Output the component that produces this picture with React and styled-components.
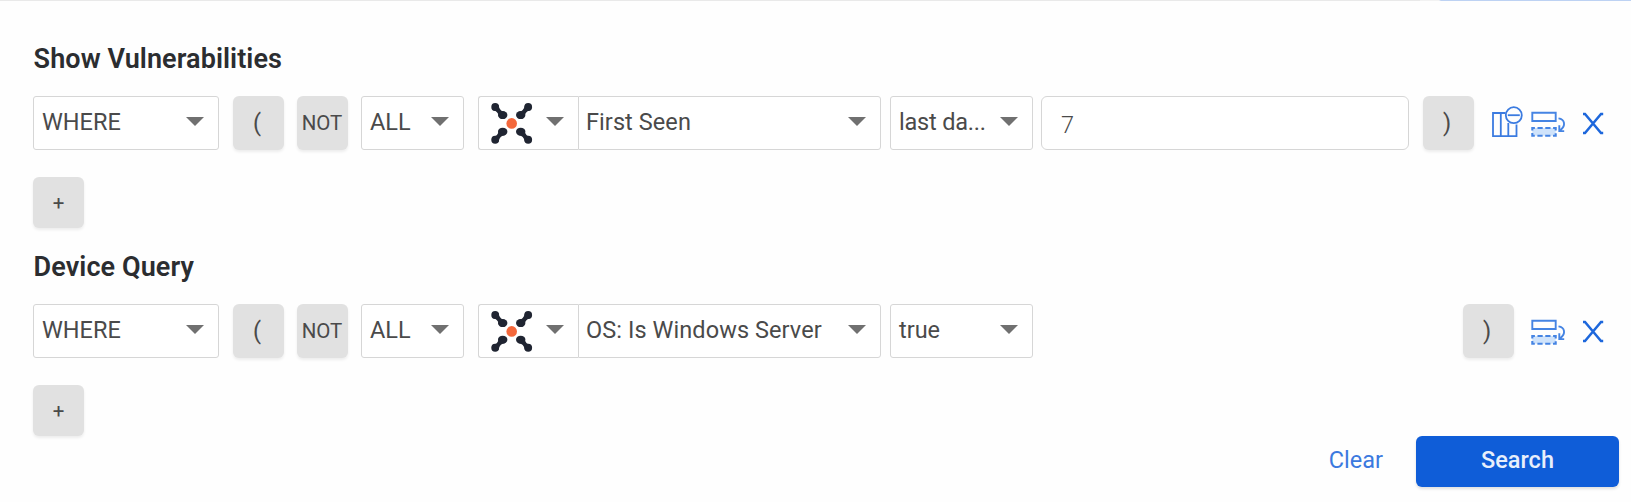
import React from 'react';
import styled, { createGlobalStyle } from 'styled-components';

const Global = createGlobalStyle`
  * { box-sizing: border-box; }
  body { margin: 0; background: #fefefe; font-family: Roboto, "Liberation Sans", sans-serif; color: #4a4a4a; }
  button, input { font-family: inherit; color: inherit; margin: 0; }
`;

const Page = styled.main`
  height: 502px;
  display: flex;
  flex-direction: column;
  overflow: hidden;
`;

const TopEdge = styled.div`
  flex: none;
  height: 1px;
  background: linear-gradient(90deg, #e9e9e9 1420px, #f2f2f2 1420px, #f2f2f2 1439px, #bdd2f3 1441px);
`;

const Section = styled.section`
  flex: none;
  height: 208px;
  padding: 0 0 0 33px;
  &:first-of-type { margin-top: 32px; }
`;

const Title = styled.h2`
  margin: 0;
  padding-left: 0.6px;
  height: 63px;
  line-height: 52px;
  font-size: 27px;
  font-weight: 600;
  letter-spacing: 0.08px;
  color: #2b2d30;
  white-space: nowrap;
`;

const Row = styled.div`
  display: flex;
  align-items: flex-start;
  height: 54px;
  margin-bottom: 27px;
`;

const SelectBox = styled.div`
  flex: none;
  display: flex;
  justify-content: space-between;
  width: ${p => p.$width}px;
  height: 54px;
  margin-right: ${p => p.$gap}px;
  padding: 0 14px 0 8px;
  border: 1px solid #d6d6d6;
  border-radius: 3px;
  background: #fff;
  font-size: 23.5px;
  line-height: 51px;
  letter-spacing: ${p => p.$spacing || 0}px;
  white-space: nowrap;
`;

const Combo = styled.div`
  display: flex;
  margin-right: 9px;
  ${SelectBox} { margin: 0; }
  ${SelectBox}:first-child { border-right: 0; border-radius: 3px 0 0 3px; padding-left: 12px; }
  ${SelectBox}:last-child { border-radius: 0 3px 3px 0; padding-left: 7px; }
`;

const Arrow = styled.i`
  flex: none;
  margin-top: 20px;
  border: 9px solid transparent;
  border-top-color: #707070;
  border-bottom: 0;
  height: 9px;
`;

const Toggle = styled.button`
  flex: none;
  width: 51px;
  height: ${p => p.$height || 54}px;
  margin-right: ${p => p.$gap || 0}px;
  padding: 0 ${p => p.$nudge || 0}px 0 0;
  border: 0;
  border-radius: 6px;
  background: #e1e1e1;
  box-shadow: 0 2px 3px rgba(0, 0, 0, 0.07);
  font-size: ${p => p.$size || 20.5}px;
  line-height: ${p => p.$line || 52}px;
  white-space: nowrap;
`;

const ValueInput = styled.input`
  flex: none;
  width: 368px;
  height: 54px;
  margin-right: 14px;
  padding: 4px 18px 0 19px;
  border: 1px solid #d6d6d6;
  border-radius: 6px;
  background: #fff;
  font-size: 23.5px;
  font-weight: 300;
  outline: none;
`;

const Actions = styled.div`
  display: flex;
  margin-left: auto;
  padding-right: 27px;
  svg { display: block; flex: none; }
`;

const Footer = styled.footer`
  flex: none;
  display: flex;
  justify-content: flex-end;
  align-items: flex-start;
  margin-top: -13px;
  padding-right: 12px;
`;

const ClearButton = styled.button`
  margin-right: 33px;
  padding: 0;
  border: 0;
  background: none;
  color: #3b79df;
  font-size: 23.5px;
  line-height: 49px;
`;

const SearchButton = styled.button`
  width: 203px;
  height: 51px;
  padding: 0 0 3px;
  border: 0;
  border-radius: 6px;
  background: #0f5dd8;
  box-shadow: 0 2px 3px rgba(0, 0, 0, 0.12);
  color: #e8effb;
  font-size: 23.5px;
  font-weight: 500;
`;

const Select = ({ width, gap, spacing, children }) => (
  <SelectBox $width={width} $gap={gap} $spacing={spacing}>
    <span>{children}</span>
    <Arrow />
  </SelectBox>
);

const arms = [[1, 1], [-1, 1], [1, -1], [-1, -1]];

const Logo = () => (
  <svg width="42" height="52" viewBox="0 0 42 52">
    {arms.map(([x, y]) => (
      <g key={`${x}${y}`} transform={`translate(20.7 26.4) scale(${x} ${y})`} fill="#202532">
        <ellipse cx="16.5" cy="16.4" rx="3.9" ry="4" />
        <ellipse cx="9" cy="8.3" rx="4.7" ry="4" />
        <path d="M7 11.5Q11.8 12 13.4 18.5L19 13.5Q13.6 12.5 12.8 7Z" />
      </g>
    ))}
    <circle cx="20.7" cy="26.4" r="5.3" fill="#f4683c" />
  </svg>
);

const ColumnsIcon = () => (
  <svg width="31" height="54" viewBox="0 0 31 54" fill="none" stroke="#3b7be0" strokeWidth="1.8">
    <path d="M13.5 17H1V40.2H24.5V28.5M8.8 17V40.2M16.3 27V40.2" />
    <circle cx="21.8" cy="19.2" r="8" fill="#fefefe" />
    <path d="M15.8 19.2H27.8" />
  </svg>
);

const DuplicateIcon = () => (
  <svg width="35" height="54" viewBox="0 0 35 54" fill="none" stroke="#4584e3" strokeWidth="1.9">
    <path d="M1.3 16.8H24.7V25H1.3Z" />
    <path d="M1.3 32H24.7V39.7H1.3Z" fill="#cfe3fb" strokeWidth="2.1" strokeDasharray="5.2 2.6" strokeDashoffset="2.6" />
    <path d="M27.5 22.4C33.8 23.2 35.2 29.8 29.3 34.2M28.3 29.2V35.1H33.2" />
  </svg>
);

const CloseIcon = () => (
  <svg width="21" height="54" viewBox="0 0 21 54" fill="none" stroke="#1d67dc" strokeWidth="2.5">
    <path d="M0 17.9H2L18 37.1H20.2M20.2 17.9H18L2 37.1H0" />
  </svg>
);

const Spacer = styled.span`
  flex: none;
  width: ${p => p.$width}px;
`;

const Filter = ({ field, operator, operatorSpacing }) => (
  <>
    <Select width={186} gap={14}>WHERE</Select>
    <Toggle $gap={13} $size={23.5} $line={50} $nudge={3}>(</Toggle>
    <Toggle $gap={13} $nudge={1}>NOT</Toggle>
    <Select width={103} gap={14}>ALL</Select>
    <Combo>
      <SelectBox $width={100}><Logo /><Arrow /></SelectBox>
      <Select width={303} spacing={0.08}>{field}</Select>
    </Combo>
    <Select width={143} gap={8} spacing={operatorSpacing}>{operator}</Select>
  </>
);

export default function App() {
  return (
    <Page>
      <Global />
      <TopEdge />
      <Section>
        <Title>Show Vulnerabilities</Title>
        <Row>
          <Filter field="First Seen" operator="last da..." operatorSpacing={-0.2} />
          <ValueInput defaultValue="7" />
          <Actions>
            <Toggle $size={23.5} $line={50} $gap={18} $nudge={3}>)</Toggle>
            <ColumnsIcon />
            <Spacer $width={8} />
            <DuplicateIcon />
            <Spacer $width={17} />
            <CloseIcon />
          </Actions>
        </Row>
        <Toggle $height={51} $line={50}>+</Toggle>
      </Section>
      <Section>
        <Title>Device Query</Title>
        <Row>
          <Filter field="OS: Is Windows Server" operator="true" />
          <Actions>
            <Toggle $size={23.5} $line={50} $gap={17} $nudge={3}>)</Toggle>
            <DuplicateIcon />
            <Spacer $width={17} />
            <CloseIcon />
          </Actions>
        </Row>
        <Toggle $height={51} $line={50}>+</Toggle>
      </Section>
      <Footer>
        <ClearButton>Clear</ClearButton>
        <SearchButton>Search</SearchButton>
      </Footer>
    </Page>
  );
}
